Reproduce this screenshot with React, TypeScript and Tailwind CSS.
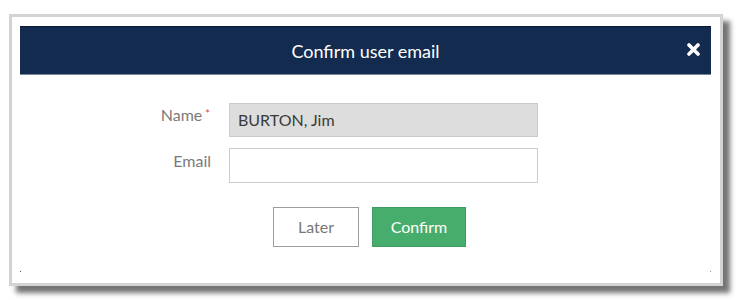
import React from "react";

export default function App() {
  return (
    <div
      className="w-[740px] h-[300px] bg-white pt-[14px] pl-[9px]"
      style={{ fontFamily: "Lato, 'Open Sans', sans-serif" }}
    >
      <div className="w-[714px] h-[272px] border-[3px] border-[#d3d3d3] bg-white shadow-[7px_7px_5px_rgba(0,0,0,0.55)] pt-[9px] pl-[8px] pr-[9px] flex flex-col">
        <div className="h-[49px] bg-[#132b4f] border-t border-[#0a1a33] border-b border-b-[#7c8797] relative flex items-center justify-center">
          <span className="text-white text-[18px] leading-none">Confirm user email</span>
          <span className="absolute right-[11px] top-[16px] text-white">
            <svg width="13" height="13" viewBox="0 0 13 13">
              <path d="M2 2 L11 11 M11 2 L2 11" stroke="white" strokeWidth="3.6" strokeLinecap="round" />
            </svg>
          </span>
        </div>
        <div className="mt-[28px] grid grid-cols-[191px_309px] gap-x-[18px] gap-y-[11px] items-start">
          <div className="text-right text-[16px] leading-5 text-[#7a7a7a] pt-[2px]">
            Name<span className="text-[#e0453a] text-[11px] align-top relative -top-[1px] ml-[3px]">*</span>
            <span className="inline-block w-[1px]" />
          </div>
          <div className="h-[34px] bg-[#dddddd] border border-[#cbcbcb] flex items-center pl-[8px] text-[16px] text-[#3a3a3a]">
            BURTON, Jim
          </div>
          <div className="text-right text-[16px] leading-5 text-[#7a7a7a] pt-[3px]">Email</div>
          <div className="h-[35px] bg-white border border-[#cccccc]" />
        </div>
        <div className="mt-[24px] flex gap-[13px] pl-[253px]">
          <button className="w-[86px] h-[40px] border border-[#9d9d9d] bg-white text-[#777] text-[16px]">
            Later
          </button>
          <button className="w-[94px] h-[40px] border border-[#3f9b60] bg-[#47ad6c] text-white text-[16px]">
            Confirm
          </button>
        </div>
        <div className="mt-auto mb-[11px] flex justify-between">
          <span className="w-[1px] h-[1px] bg-[#555]" />
          <span className="w-[1px] h-[1px] bg-[#999]" />
        </div>
      </div>
    </div>
  );
}
